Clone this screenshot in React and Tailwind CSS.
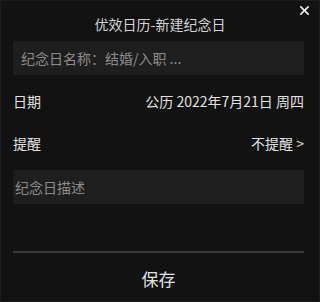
export default function App() {
  return (
    <div className="relative w-[320px] h-[302px] bg-[#121212] border border-[#1c1c1c] text-[#dcdcdc] font-['Noto_Sans_CJK_SC','Noto_Sans',sans-serif] overflow-hidden">
      <button className="absolute right-[9px] top-[1px] leading-none">
        <svg width="11" height="11" viewBox="0 0 12 12" className="mt-[3px]">
          <path d="M2 2 L10 10 M10 2 L2 10" stroke="#f0f0f0" strokeWidth="1.8" strokeLinecap="round" />
        </svg>
      </button>
      <div className="h-[40px] pt-[13px] text-center text-[14px] leading-[20px] text-[#d4d4d4]">优效日历-新建纪念日</div>
      <div className="pl-[12px] pr-[15px]">
        <div className="h-[34px] bg-[#1e1e1e] flex items-center px-[8px] text-[14px] text-[#8c8c8c]">纪念日名称：结婚/入职 ...</div>
        <div className="h-[42px] mt-[5px] flex items-center justify-between text-[14px] text-[#e2e2e2]">
          <span>日期</span>
          <span>公历 2022年7月21日 周四</span>
        </div>
        <div className="h-[42px] flex items-center justify-between text-[14px] text-[#e2e2e2]">
          <span>提醒</span>
          <span>不提醒 &gt;</span>
        </div>
        <div className="h-[34px] mt-[6px] bg-[#1e1e1e] flex items-center px-[2px] text-[14px] text-[#8c8c8c]">纪念日描述</div>
        <div className="mt-[47px] h-[2px] bg-[#3a3a3a]"></div>
        <div className="h-[52px] flex items-center justify-center text-[17px] text-[#e0e0e0]">保存</div>
      </div>
    </div>
  );
}
